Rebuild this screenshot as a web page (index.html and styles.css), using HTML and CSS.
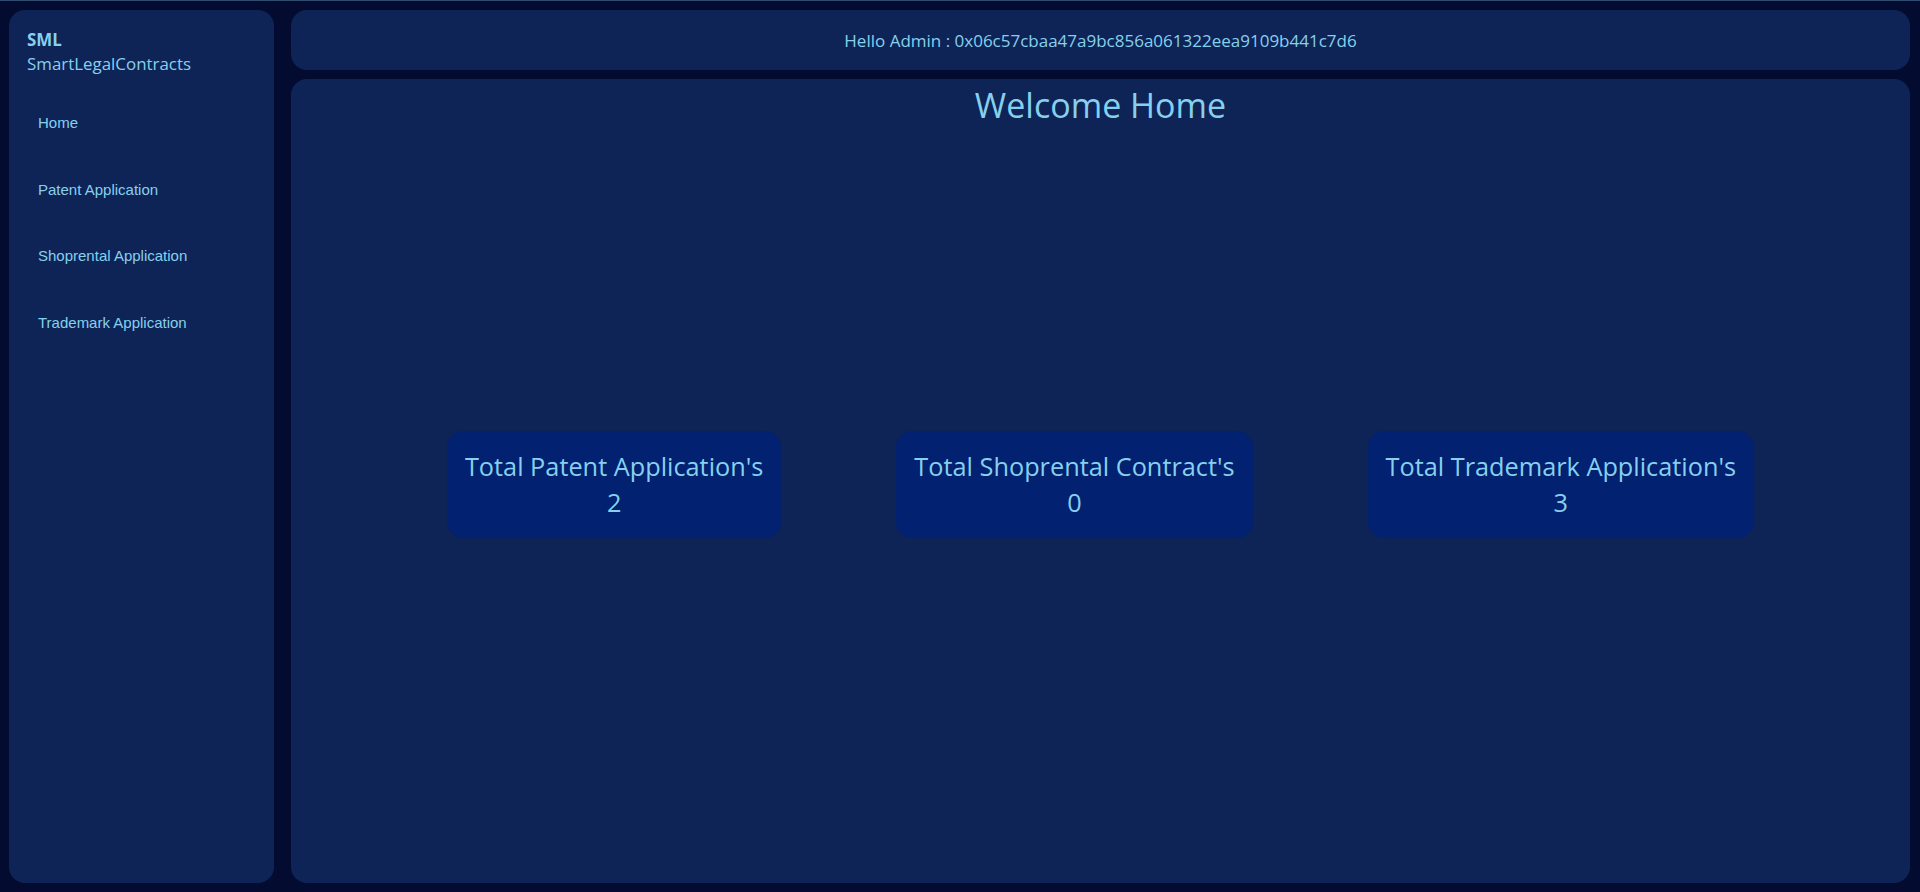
FILE: index.html
```html
<!DOCTYPE html>
<html lang="en">
<head>
<meta charset="utf-8">
<title>SmartLegalContracts</title>
<link rel="stylesheet" href="styles.css">
</head>
<body>
<div class="app">
  <aside class="sidebar">
    <div class="brand">
      <div class="brand-short">SML</div>
      <div class="brand-long">SmartLegalContracts</div>
    </div>
    <nav class="nav">
      <a class="nav-link" href="#">Home</a>
      <a class="nav-link" href="#">Patent Application</a>
      <a class="nav-link" href="#">Shoprental Application</a>
      <a class="nav-link" href="#">Trademark Application</a>
    </nav>
  </aside>
  <header class="topbar">Hello Admin : 0x06c57cbaa47a9bc856a061322eea9109b441c7d6</header>
  <main class="main">
    <h1 class="title">Welcome Home</h1>
    <div class="cards">
      <div class="card">Total Patent Application's<br>2</div>
      <div class="card">Total Shoprental Contract's<br>0</div>
      <div class="card">Total Trademark Application's<br>3</div>
    </div>
  </main>
</div>
</body>
</html>
```
FILE: styles.css
```css
* { box-sizing: border-box; }
html, body { margin: 0; height: 100%; }
body {
  background: #040b30;
  border-top: 1px solid #2f4d70;
  padding: 9px 10px 9px 9px;
  color: #86d0ee;
  font-family: "Open Sans", "Noto Sans", sans-serif;
}
.app {
  height: 100%;
  display: grid;
  grid-template-columns: 265px 1fr;
  grid-template-rows: 60px 1fr;
  column-gap: 17px;
  row-gap: 9px;
}
.sidebar {
  grid-row: 1 / 3;
  background: #0f2456;
  border-radius: 16px;
  padding: 18px 18px;
}
.brand { font-size: 16.9px; line-height: 24px; }
.brand-short { font-weight: 700; }
.nav { margin-top: 14px; display: flex; flex-direction: column; }
.nav-link {
  display: block;
  color: #86d0ee;
  text-decoration: none;
  font-family: "Liberation Sans", Arial, sans-serif;
  font-size: 15px;
  line-height: 18.7px;
  padding: 24px 11px;
}
.topbar {
  background: #0f2456;
  border-radius: 16px;
  display: flex;
  align-items: center;
  justify-content: center;
  font-size: 17px;
}
.main {
  background: #0f2456;
  border-radius: 16px;
  display: grid;
}
.title {
  grid-area: 1 / 1;
  align-self: start;
  margin: 0;
  padding-top: 4px;
  text-align: center;
  font-weight: 400;
  font-size: 34px;
  line-height: 44px;
}
.cards {
  grid-area: 1 / 1;
  align-self: center;
  margin-top: 6px;
  display: flex;
  justify-content: center;
  gap: 115px;
}
.card {
  background: #022170;
  border-radius: 16px;
  padding: 17.5px 18px;
  text-align: center;
  font-size: 25.3px;
  line-height: 36px;
}
```
